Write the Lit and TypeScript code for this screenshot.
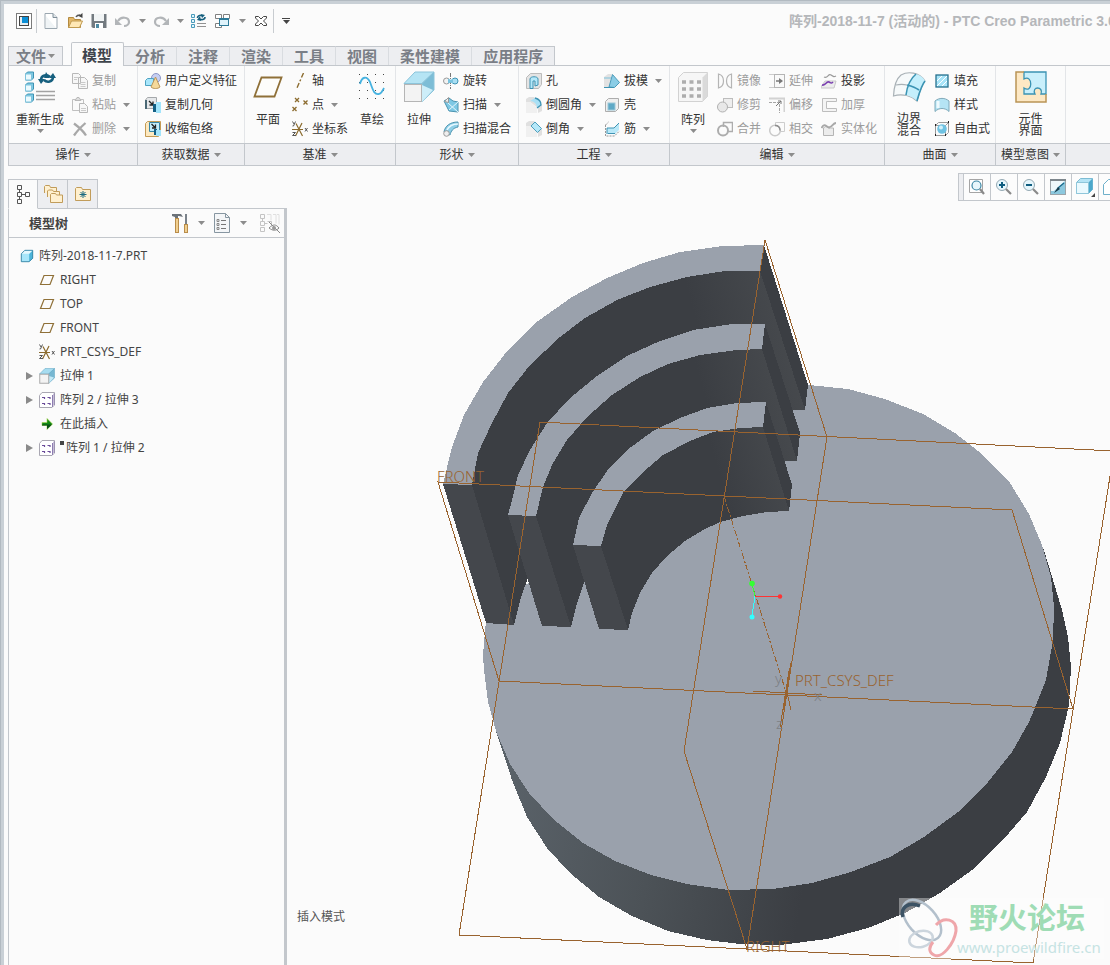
import { LitElement, html, svg, css, nothing } from "lit";
import type { SVGTemplateResult } from "lit";
import { customElement, property } from "lit/decorators.js";
import { classMap } from "lit/directives/class-map.js";

type Glyph = { w: number; h: number; art: SVGTemplateResult };

const csysArt = svg`
  <path d="M0 8.500h11M10 2L3.500 15M4 2.500l6.500 12.500" stroke="#8b6b2e" stroke-width="1.200" fill="none"/>
  <path d="M.500 .500l1.500 2.500M3.500 .500L1.500 5H.500M.500 11.500h3l-3 3h3.500M13 7l2.500 3.500M15.500 7l-2.500 3.500" stroke="#555" fill="none"/>`;

const solidCube = svg`
  <path d="M1.500 5.500l4-4h9v9l-4 4h-9z" fill="#a8e6fa"/>
  <path d="M10.500 14.500v-9l4-4v9z" fill="#4db4d9"/>
  <path d="M1.500 5.500l4-4h9l-4 4z" fill="#e6f8fe"/>
  <path d="M1.500 5.500l4-4h9v9l-4 4h-9z" fill="none" stroke="#2b7fa1"/>`;

const patternArt = svg`
  <path d="M.500 3.500L3 .500h12.500V13L13 15.500H.500z" fill="#fff" stroke="#a9a7b2"/>
  <path d="M13.500 3v12M15 1.500V13" stroke="#8d7db0"/>
  <path d="M3 5.500h2.500V7M8.500 5.500H11V7M3 11.500h2.500V13M8.500 11.500H11V13" stroke="#6b4c9a" fill="none" stroke-width="1.200"/>`;

const glyphs: Record<string, Glyph> = {
  app: { w: 16, h: 16, art: svg`<rect x=".5" y=".5" width="15" height="15" fill="#fff" stroke="#7b7b7b"/><rect x="3.500" y="3.500" width="9" height="9" fill="#e6eef2" stroke="#444"/><rect x="6" y="4" width="6" height="6" fill="#0c8fd6"/>` },
  file: { w: 16, h: 16, art: svg`<path d="M2 .5h8l4 4v11H2z" fill="#fff" stroke="#9ba7b0"/><path d="M3 15V3l10 12z" fill="#f0f4f6"/><path d="M10 .5v4h4" fill="#dfe5e9" stroke="#7f8e99"/>` },
  open: { w: 17, h: 16, art: svg`<path d="M1.500 14.500v-10h5l1 2h6v8z" fill="#e3b768" stroke="#b38a40"/><path d="M1.500 14.500l3-6.500h11l-3 6.500z" fill="#ffe8b5" stroke="#c09a50"/><path d="M9 4c1-2 2-2 4-2" fill="none" stroke="#555" stroke-width="1.500"/><path d="M15.500 0v5l-4-2z" fill="#444"/>` },
  save: { w: 16, h: 16, art: svg`<path d="M.500 1h15v14H2l-1.500-1z" fill="#737a80"/><rect x="3" y="1" width="10" height="7" fill="#f1f4f5"/><rect x="4" y="10" width="8" height="5" fill="#fff"/><rect x="5" y="11" width="3" height="4" fill="#4d8aa3"/>` },
  undo: { w: 16, h: 16, art: svg`<path d="M3 8c3-5 11-4 11 1 0 2-2 4-5 4" fill="none" stroke="#b2b5b8" stroke-width="2.200"/><path d="M0 5v7h7z" fill="#b2b5b8"/>` },
  redo: { w: 16, h: 16, art: svg`<path d="M13 8C10 3 2 4 2 9c0 2 2 4 5 4" fill="none" stroke="#b2b5b8" stroke-width="2.200"/><path d="M16 5v7H9z" fill="#b2b5b8"/>` },
  regenSmall: { w: 16, h: 16, art: svg`<path d="M.5 1.500h3v3h-3zM.5 6.500h3v3h-3zM.5 11.500h3v3h-3z" fill="#e2f6fd" stroke="#4a9bbb"/><path d="M6 10.500h9M6 13.500h9" stroke="#929292"/><path d="M6.500 5c0-3 4-3 5-2M14 4c0 3-4 3-5 2" fill="none" stroke="#17607f" stroke-width="1.600"/><path d="M10 1l4 1-3 3zM10 8L6 7l3-4z" fill="#17607f"/>` },
  windows: { w: 16, h: 16, art: svg`<path d="M.5 1.500h6v4h-6zM8.500 1.500h6v4h-6zM.5 10.500h6v4h-6z" fill="#fff" stroke="#808080"/><rect x="4.500" y="5.500" width="9" height="7" fill="#dff3fb" stroke="#2e7a98"/><path d="M4.500 6.500h9" stroke="#2e7a98"/>` },
  close: { w: 12, h: 12, art: svg`<path d="M.5 1.500h3L6 4l2.500-2.500h3v1.500L8.500 6l3 3v1.500h-3L6 8l-2.500 2.500h-3V9l3-3-3-3z" fill="#fff" stroke="#444"/>` },

  regen: { w: 32, h: 32, art: svg`
    ${[1, 12, 23].map((y) => svg`<path d=${`M1.500 ${y + 2}l2-2h6v6l-2 2h-6z`} fill="#7fcbe5" stroke="#3f93b3"/><path d=${`M1.500 ${y + 2}h6v6h-6z`} fill="#ecfafe" stroke="#7fc3dc"/>`)}
    <path d="M12 20.500h19M12 24.500h19M12 28.500h19" stroke="#a2a2a2" stroke-width="1.500"/>
    <path d="M17 9c0-5 6-6 9-3M29 6c0 5-6 6-9 3" fill="none" stroke="#17607f" stroke-width="2.500"/>
    <path d="M22 1l4 6h-6zM14 8h7l-4 5zM25 7h7l-3-5z" fill="#17607f"/>` },
  copy: { w: 16, h: 16, art: svg`<path d="M.5.5h6l2 2v8h-8zM6.500 4.500h6l3 3v8h-9z" fill="#f7f7f7" stroke="#b8b8b8"/><path d="M2 4.500h4M2 6.500h3M8.500 9.500h5M8.500 11.500h5M8.500 13.500h5" stroke="#cacaca"/>` },
  paste: { w: 16, h: 16, art: svg`<path d="M.5 2.500h11v11h-11z" fill="#fafafa" stroke="#c0c0c0"/><path d="M3 3.500l2-3h2l2 3z" fill="#ddd" stroke="#b8b8b8"/><path d="M7.500 6.500h5l3 3v6h-8z" fill="#f7f7f7" stroke="#b8b8b8"/><path d="M9 11.500h5M9 13.500h5" stroke="#cacaca"/>` },
  remove: { w: 16, h: 16, art: svg`<path d="M2 2.500c4 3 9 7 12 12M13.500 2C9 6 5 10 2 14.500" stroke="#a8a8a8" stroke-width="2.300" fill="none"/>` },
  udf: { w: 16, h: 16, art: svg`<circle cx="11" cy="5" r="4.500" fill="#c6cef2" stroke="#8c96c4"/><path d="M.5 7.500l2-2h6v7h-8z" fill="#a8e6fb" stroke="#4fa3c2"/><path d="M10.500 4l4.500 10c-2 2-7 2-9 0z" fill="#f5d99a" stroke="#b9965a"/>` },
  copyGeom: { w: 16, h: 16, art: svg`<path d="M.5 3l2-2.500h9v9l-2 2h-9z" fill="#e6e8ea" stroke="#a5a8ab"/><path d="M1 3v9" stroke="#4b6875" stroke-width="2"/><path d="M4 4l3.500 3.500M8 4.500V8H4.500" stroke="#222" stroke-width="1.300" fill="none"/><rect x="8" y="7" width="3" height="8" fill="#135f84"/><rect x="11" y="5" width="5" height="11" fill="#a2e4fb"/>` },
  shrink: { w: 16, h: 16, art: svg`<path d="M.5 2.500l2-2h13v12l-2 3h-13z" fill="#fde9c0" stroke="#c49b55"/><path d="M4.500 1.500h10v9h-10z" fill="#c4ecf9" stroke="#3a86a4"/><path d="M6.500 3l3.500 3.500M10.500 3.500V7H7" stroke="#222" stroke-width="1.300" fill="none"/><rect x="9" y="8" width="3" height="6" fill="#135f84"/><rect x="11" y="9" width="5" height="6" fill="#a2e4fb"/>` },
  plane: { w: 30, h: 22, art: svg`<path d="M8.500 1.500h20l-7 19h-20z" fill="#fdfdfb" stroke="#8f7038" stroke-width="1.800"/>` },
  axis: { w: 16, h: 16, art: svg`<path d="M11.500 0L4.500 16" stroke="#8b6b2e" stroke-width="1.400" stroke-dasharray="5 2 2 2"/>` },
  point: { w: 16, h: 16, art: svg`<path d="M3 1l4 4M7 1L3 5M11.500 3.500l4 4M15.500 3.500l-4 4M.500 10l4 4M4.500 10l-4 4" stroke="#8b6b2e" stroke-width="1.300"/>` },
  csys: { w: 16, h: 16, art: csysArt },
  sketch: { w: 28, h: 28, art: svg`${[1, 9, 17, 25].map((y) => svg`<path d=${`M1 ${y + 0.5}h26`} stroke="#444" stroke-dasharray="1 7"/>`)}<path d="M2 11C4 3 9 3 12 9c3 8 4 13 9 12 3-1 4-4 5-6" fill="none" stroke="#45b2e0" stroke-width="1.800"/>` },
  extrude: { w: 32, h: 32, art: svg`<path d="M1 12.500L12 1h19L19 12.500z" fill="#b5e4f4" stroke="#8cc4da"/><path d="M19 12.500L31 1v18L19 31z" fill="#7dbdd6" stroke="#8cc4da"/><path d="M19 31V14l11 5z" fill="#cdeef9"/><rect x="1.500" y="13.500" width="17" height="17" fill="#f3f3f3" stroke="#b5b5b5"/>` },
  revolve: { w: 16, h: 16, art: svg`<path d="M7.500 0v16" stroke="#777" stroke-dasharray="4 1 1 1"/><ellipse cx="3.500" cy="8" rx="3" ry="3" fill="#f2f2f2" stroke="#999"/><ellipse cx="12" cy="8" rx="3" ry="3" fill="#a9def2" stroke="#3e93b3"/><path d="M5 5.500c2 1.500 3 1.500 5 0v5c-2-1-3-1-5 0z" fill="#79c4e0"/>` },
  sweep: { w: 16, h: 16, art: svg`<path d="M1 4l5-3 4 3 5 1v10l-9-1-3-6z" fill="#7ec8e4" stroke="#4c94b0"/><path d="M5 6l10 9M6 13l9-8" stroke="#e5f6fc"/><path d="M1.500 4.500l4-4v5z" fill="#eee" stroke="#999"/>` },
  blend: { w: 16, h: 16, art: svg`<path d="M1 11C2 5 7 1 15 1v5c-5 1-7 4-8 8z" fill="#8fcfe7" stroke="#4c94b0"/><path d="M4 9c2-4 5-6 11-6" stroke="#e8f8ff" stroke-width="1.500" fill="none"/><circle cx="3.500" cy="12.500" r="2.800" fill="#eee" stroke="#999"/>` },
  hole: { w: 16, h: 16, art: svg`<path d="M.5 4.500l4-4h11v11l-3 4h-12z" fill="#e4e4e4" stroke="#bbb"/><path d="M4 15.500V6c0-3 8-3 8 0v6l-3 1V8H7v7.500z" fill="#b5e8f9" stroke="#3e93b3"/>` },
  round: { w: 16, h: 16, art: svg`<path d="M0 2L3 0h5l8 8v6l-4 2V11L4 5H0z" fill="#e0e0e0"/><path d="M0 5h4l7 6v5H0z" fill="#f0f0f0"/><path d="M4 4l5-3c4 1 6 4 6 7l-4 3c0-4-3-7-7-7z" fill="#a9e0f5"/><path d="M9 1c4 1 6 4 6 7l-4 3" stroke="#3e93b3" stroke-width="1.300" fill="none"/>` },
  chamfer: { w: 16, h: 16, art: svg`<path d="M0 2L3 0h5l8 8v6l-4 2V11L4 5H0z" fill="#e0e0e0"/><path d="M0 5h4l7 6v5H0z" fill="#f0f0f0"/><path d="M5 5l4-4 6.500 6.500-4 4z" fill="#b5e8f9" stroke="#4f9fbd"/>` },
  draft: { w: 16, h: 16, art: svg`<path d="M0 14V4l4-3h4L5 14z" fill="#e2e2e2"/><path d="M5 14L8.500 1.500l7 8-5 5z" fill="#8bcde6" stroke="#4c9bb9"/><path d="M0 14.500h10" stroke="#3e93b3"/><path d="M0 5h7" stroke="#7fc3dc"/>` },
  shell: { w: 16, h: 16, art: svg`<path d="M1.500 4.500l3-3h10v10l-3 3h-10z" fill="#efefef" stroke="#adadad"/><rect x="4" y="6" width="7" height="7" fill="#5fa9c6" stroke="#9cc7d8"/>` },
  rib: { w: 16, h: 16, art: svg`<path d="M1.500 4v11h9l5-5M1.500 4l3-3" fill="none" stroke="#999" stroke-dasharray="2 1"/><path d="M3 7h7l5-5v7l-4 4H3z" fill="#b9e8f8"/><path d="M3 13V7h7l5-5M4 12.500h7" fill="none" stroke="#3e93b3"/>` },
  pattern: { w: 32, h: 32, art: svg`<path d="M1.500 6.500l5-5h24v24l-5 5h-24z" fill="#f6f6f6" stroke="#d2d2d2"/><path d="M25.500 6.500l5-5v24l-5 5z" fill="#dadada"/>${[11, 18, 25].map((y) => svg`<path d=${`M5 ${y}h19`} stroke="#adadad" stroke-width="3.500" stroke-dasharray="4 3.500"/>`)}` },
  mirror: { w: 16, h: 16, art: svg`<path d="M1.500 1c4 1 5 4 5 7s-1 6-5 7zM14.500 1c-4 1-5 4-5 7s1 6 5 7z" fill="none" stroke="#b5b5b5" stroke-width="1.200"/>` },
  trim: { w: 16, h: 16, art: svg`<rect x="6.500" y="1.500" width="9" height="9" fill="#eee" stroke="#bdbdbd"/><circle cx="5.500" cy="10" r="5" fill="#e8e8e8" stroke="#b0b0b0"/>` },
  merge: { w: 16, h: 16, art: svg`<path d="M6.500 6V1.500h9v9H11" fill="none" stroke="#adadad" stroke-width="1.500"/><circle cx="6" cy="9.500" r="5" fill="none" stroke="#adadad" stroke-width="2"/>` },
  extend: { w: 16, h: 16, art: svg`<rect x="5.500" y="1.500" width="10" height="13" fill="#f9f9f9" stroke="#b5b5b5"/><path d="M0 1.500h5M0 14.500h5" stroke="#ccc"/><path d="M7 8h5" stroke="#777" stroke-width="1.500"/><path d="M10 5l4 3-4 3z" fill="#777"/>` },
  offset: { w: 16, h: 16, art: svg`<path d="M0 1.500h15.500V15" fill="none" stroke="#d2d2d2" stroke-width="2"/><path d="M0 5.500h10.500V16" fill="none" stroke="#a5a5a5" stroke-dasharray="3 1"/><path d="M7 9l5-5M9 4h3v3" stroke="#777" fill="none"/>` },
  intersect: { w: 16, h: 16, art: svg`<path d="M6.500 4V1.500h9v9H11" fill="none" stroke="#cdcdcd"/><circle cx="6" cy="9.500" r="5.300" fill="none" stroke="#cacaca" stroke-width="1.500"/><path d="M6 4.500c3 0 5 2 5 5" stroke="#8d8d8d" stroke-width="1.300" fill="none"/>` },
  project: { w: 16, h: 16, art: svg`<path d="M3 4c4 2 4-4 7-2 3 2 3 2 5 1" fill="none" stroke="#999" stroke-width="1.200"/><path d="M0 14l4-6h11l-2 7H0z" fill="#ededed" stroke="#c8c8c8"/><path d="M1 12c4 1 4-4 7-3 2 1 2 2 4 0" fill="none" stroke="#7a3fb0" stroke-width="1.600"/>` },
  thicken: { w: 16, h: 16, art: svg`<path d="M15.500 1.500h-14v13h14v-3h-10v-7h10z" fill="#f4f4f4" stroke="#bdbdbd"/>` },
  solidify: { w: 16, h: 16, art: svg`<path d="M2.500 14.500V7c3-4 5 2 7 0v0l3 0v7.500z" fill="#ececec" stroke="#b5b5b5"/><path d="M.500 7C4 0 6 8 9 6c3-1 3-4 6-4" fill="none" stroke="#a8a8a8" stroke-width="1.800"/>` },
  boundary: { w: 34, h: 32, art: svg`<path d="M1.500 25C2 15 4 8 9 4c7-4 18-3 24 6-4 5-6 13-8 20-5-5-15-8-23.500-5z" fill="#f6f9fa" stroke="#a9b1b6" stroke-width="1.200"/><path d="M24 3c4 1 7 3 9 7-4 5-6 13-8 20-3-3-7-5-11-6 1-8 4-16 10-21z" fill="#c4effc"/><path d="M4 14c4-1 7-1 11 0" fill="none" stroke="#a9b1b6" stroke-width="1.200"/><path d="M14 24c1-8 4-16 10-21M15 14c4 1 8 2 12 5M33 10c-4 5-6 13-8 20" fill="none" stroke="#3a93b3" stroke-width="1.600"/>` },
  fill: { w: 16, h: 16, art: svg`<rect x="2" y="2" width="12" height="12" fill="#a8e4f8" stroke="#26708e" stroke-width="1.300"/><path d="M3 8l5-5M3 13L13 3M8 13l5-5" stroke="#fff"/>` },
  style: { w: 16, h: 16, art: svg`<path d="M1 14.500V4c4-3.500 10-3.500 14 0v10.500c-4-4-10-4-14 0z" fill="#b5e4f4" stroke="#7fa9b9"/><path d="M4 11V4" stroke="#eefafe" stroke-width="3"/>` },
  freestyle: { w: 16, h: 16, art: svg`<path d="M1.500 4.500l3-3h10v10l-3 3h-10zM1.500 4.500h10v10M11.500 4.500l3-3" fill="none" stroke="#999"/><circle cx="8" cy="8" r="4.800" fill="#6fc2e2"/><circle cx="7" cy="6.500" r="2" fill="#d2f0fa"/><path d="M1 4h1M1 14h1M14 1h1M11 14h1" stroke="#222" stroke-width="2"/>` },
  component: { w: 32, h: 32, art: svg`<rect x="1" y="1" width="30" height="30" fill="#fde8c4"/><path d="M9 1h22v22h-5c3-8-10-8-6 0H9v-6c9 6 9-14 0-9z" fill="#c9effb" stroke="#3a93b3" stroke-width="1.300"/><path d="M9 1H1v30h30v-8" stroke="#b99455" stroke-width="1.500" fill="none"/>` },

  treeTab: { w: 16, h: 20, art: svg`<path d="M2.500 1.500h4v4h-4zM2.500 8.500h4v4h-4zM2.500 15.500h4v4h-4zM10.500 8.500h4v4h-4zM4.500 5.500v3M4.500 12.500v3M6.500 10.500h4" fill="none" stroke="#555"/>` },
  folders: { w: 20, h: 20, art: svg`<path d="M1.500 9V2.500l1-1h4l1 2h6V7" fill="#fff0cf" stroke="#c19c5a"/><path d="M4.500 13V7l1-1h4l1 1.500h6V11" fill="#fff0cf" stroke="#c19c5a"/><path d="M7.500 18.500v-8l1-1h4l1 1.500h6v7.500z" fill="#fff0cf" stroke="#c19c5a"/>` },
  favorites: { w: 18, h: 16, art: svg`<path d="M1.500 14.500v-12l1-1h5l1 2h8v11z" fill="#fff0cf" stroke="#c19c5a"/><path d="M9 5v7M5.500 8.500h7M6.500 6l5 5M11.500 6l-5 5" stroke="#1b6a80"/>` },
  tools: { w: 18, h: 20, art: svg`<path d="M1 1h9l2 3-4-1H7v3H4V4L1 3z" fill="#6b7279"/><rect x="4.500" y="5.500" width="3" height="14" fill="#f0cf90" stroke="#b98d4a"/><path d="M15 1v10" stroke="#7a828a" stroke-width="2"/><rect x="13.500" y="11.500" width="3" height="8" fill="#f0cf90" stroke="#b98d4a"/>` },
  settings: { w: 18, h: 20, art: svg`<path d="M1.500.5h11l4 4v15h-15z" fill="#f4f6f8" stroke="#8796a1"/><path d="M12.500.5v4h4" fill="none" stroke="#8796a1"/><path d="M8 7.500h5M8 11.500h5M8 15.500h5" stroke="#777"/><path d="M4 6.500h2v2H4zM4 10.500h2v2H4zM4 14.500h2v2H4z" fill="none" stroke="#888"/>` },
  hideTree: { w: 22, h: 20, art: svg`<path d="M1.500 1.500h4v4h-4zM1.500 8.500h4v4h-4zM1.500 14.500h4v4h-4zM8.500 8.500h4v4M3.500 5.500v3M5.500 10.500h3" fill="none" stroke="#c4c4c4"/><path d="M8 1.500h4v6M14 1.500h3v9M18 1.500h2v10" fill="none" stroke="#e0e0e0"/><path d="M10 15c4-4 7-4 10 0-3 3-6 3-10 0zM10 9l11 11" fill="none" stroke="#888"/><circle cx="15" cy="15" r="2" fill="#999"/>` },

  part: { w: 14, h: 14, art: svg`<svg viewBox="0 0 16 16" width="14" height="14">${solidCube}</svg>` },
  datum: { w: 16, h: 16, art: svg`<path d="M5 3.500h9.500L11 12.500H1.500z" fill="none" stroke="#8f7038" stroke-width="1.200"/>` },
  extrudeSmall: { w: 16, h: 16, art: svg`<svg viewBox="0 0 32 32" width="16" height="16"><path d="M1 12L12 1h19L20 12z" fill="#a6dcf0" stroke="#5aa3c0"/><path d="M19 12L31 1v19L19 31z" fill="#76b7d2" stroke="#5aa3c0"/><path d="M20 30V16l10 3z" fill="#c4e9f6"/><rect x="1.500" y="12.500" width="18" height="18" fill="#f3f3f3" stroke="#aaa" stroke-width="2"/></svg>` },
  patternSmall: { w: 16, h: 16, art: patternArt },
  insert: { w: 16, h: 16, art: svg`<path d="M3 6.500h5v-4l5.500 5.500L8 13.500v-4H3z" fill="#128a12" stroke="#a9d64e" stroke-width=".6"/><path d="M3 8.500h10L8 13V9.500H3z" fill="#0b4f16"/>` },

  refit: { w: 18, h: 18, art: svg`<path d="M1.500 1.500h13v13h-13z" fill="#fff" stroke="#a5a5a5"/><circle cx="8.500" cy="7.500" r="4.500" fill="#e8f7fc" stroke="#3a86a4" stroke-width="1.200"/><path d="M12 11l4 5" stroke="#8a8a8a" stroke-width="2.200"/>` },
  zoomIn: { w: 18, h: 18, art: svg`<circle cx="7" cy="7" r="5.500" fill="#e6f6fc" stroke="#95a9b3"/><path d="M4 7h6M7 4v6" stroke="#0f5d80" stroke-width="2"/><path d="M11 11l5 5" stroke="#8a8a8a" stroke-width="2.200"/>` },
  zoomOut: { w: 18, h: 18, art: svg`<circle cx="7" cy="7" r="5.500" fill="#e6f6fc" stroke="#95a9b3"/><path d="M4 7h6" stroke="#0f5d80" stroke-width="2"/><path d="M11 11l5 5" stroke="#8a8a8a" stroke-width="2.200"/>` },
  repaint: { w: 18, h: 18, art: svg`<rect x="1.500" y="1.500" width="15" height="15" fill="#8cc8de" stroke="#9ca4a9"/><path d="M2 3h14L5 13H2z" fill="#eef8fb"/><path d="M1 2h16" stroke="#7d868c" stroke-width="2"/><path d="M15 5L9 10" stroke="#1b6a8a" stroke-width="1.300"/><path d="M9 9l2 2-6 4z" fill="#15394a"/>` },
  shading: { w: 20, h: 20, art: svg`<path d="M1.500 5.500l4-4h12v11l-4 4h-12z" fill="#b5e4f5" stroke="#7dbcd4"/><path d="M13.500 16.500v-11l4-4v11z" fill="#4ca8cb"/><path d="M1.500 5.500h12v11h-12z" fill="#eaf9fe" stroke="#8fc6da"/><path d="M20 16v4h-4z" fill="#444"/>` },
  saved: { w: 20, h: 20, art: svg`<path d="M1.500 7.500l5-5h11v11l-4 4h-12z" fill="#fff" stroke="#6fb0ca"/>` },
};

const glyph = (name: string) => {
  const g = glyphs[name];
  return html`<svg class="glyph" width=${g.w} height=${g.h} viewBox=${`0 0 ${g.w} ${g.h}`} aria-hidden="true">${g.art}</svg>`;
};

const caret = (dark = false) =>
  html`<svg class="caret" width="7" height="4" viewBox="0 0 7 4" aria-hidden="true"><path d="M0 0h7L3.500 4z" fill=${dark ? "#444" : "#8c8c8c"}/></svg>`;

interface Command { icon: string; label: string; off?: boolean; menu?: boolean }
interface Big { icon: string; lines: string[]; menu?: boolean }
type Block = Big | Command[];
interface Group { title: string; blocks: Block[] }

const groups: Group[] = [
  { title: "操作", blocks: [
    { icon: "regen", lines: ["重新生成"], menu: true },
    [{ icon: "copy", label: "复制", off: true }, { icon: "paste", label: "粘贴", off: true, menu: true }, { icon: "remove", label: "删除", off: true, menu: true }],
  ] },
  { title: "获取数据", blocks: [
    [{ icon: "udf", label: "用户定义特征" }, { icon: "copyGeom", label: "复制几何" }, { icon: "shrink", label: "收缩包络" }],
  ] },
  { title: "基准", blocks: [
    { icon: "plane", lines: ["平面"] },
    [{ icon: "axis", label: "轴" }, { icon: "point", label: "点", menu: true }, { icon: "csys", label: "坐标系" }],
    { icon: "sketch", lines: ["草绘"] },
  ] },
  { title: "形状", blocks: [
    { icon: "extrude", lines: ["拉伸"] },
    [{ icon: "revolve", label: "旋转" }, { icon: "sweep", label: "扫描", menu: true }, { icon: "blend", label: "扫描混合" }],
  ] },
  { title: "工程", blocks: [
    [{ icon: "hole", label: "孔" }, { icon: "round", label: "倒圆角", menu: true }, { icon: "chamfer", label: "倒角", menu: true }],
    [{ icon: "draft", label: "拔模", menu: true }, { icon: "shell", label: "壳" }, { icon: "rib", label: "筋", menu: true }],
  ] },
  { title: "编辑", blocks: [
    { icon: "pattern", lines: ["阵列"], menu: true },
    [{ icon: "mirror", label: "镜像", off: true }, { icon: "trim", label: "修剪", off: true }, { icon: "merge", label: "合并", off: true }],
    [{ icon: "extend", label: "延伸", off: true }, { icon: "offset", label: "偏移", off: true }, { icon: "intersect", label: "相交", off: true }],
    [{ icon: "project", label: "投影" }, { icon: "thicken", label: "加厚", off: true }, { icon: "solidify", label: "实体化", off: true }],
  ] },
  { title: "曲面", blocks: [
    { icon: "boundary", lines: ["边界", "混合"] },
    [{ icon: "fill", label: "填充" }, { icon: "style", label: "样式" }, { icon: "freestyle", label: "自由式" }],
  ] },
  { title: "模型意图", blocks: [{ icon: "component", lines: ["元件", "界面"] }] },
];

const reset = css`
  * { box-sizing: border-box; }
  button {
    appearance: none; margin: 0; padding: 0; border: 0; background: none;
    font: inherit; color: inherit; display: flex; align-items: center; justify-content: center;
  }
  svg { display: block; flex: none; }
`;

@customElement("quick-access")
export class QuickAccess extends LitElement {
  static styles = [reset, css`
    :host { display: flex; align-items: center; height: 32px; }
    .tool { width: 24px; height: 24px; }
    .app { width: 32px; padding-left: 8px; }
    .drop { width: 14px; height: 24px; }
    .rule { width: 1px; height: 24px; background: #c8ccd0; }
    .start { margin-right: 2px; }
    .more { width: 24px; height: 24px; flex-direction: column; gap: 1px; }
    .bar { width: 8px; height: 1px; background: #444; }
  `];

  private tool(icon: string, label: string) {
    return html`<button class="tool" aria-label=${label}>${glyph(icon)}</button>`;
  }
  private drop(label: string) {
    return html`<button class="drop" aria-label=${label}>${caret()}</button>`;
  }
  render() {
    return html`
      <button class="tool app" aria-label="窗口">${glyph("app")}</button>
      <span class="rule start"></span>
      ${this.tool("file", "新建")} ${this.tool("open", "打开")} ${this.tool("save", "保存")}
      ${this.tool("undo", "撤销")} ${this.drop("撤销列表")}
      ${this.tool("redo", "重做")} ${this.drop("重做列表")}
      ${this.tool("regenSmall", "重新生成")} ${this.tool("windows", "窗口")} ${this.drop("窗口列表")}
      ${this.tool("close", "关闭")}
      <span class="rule"></span>
      <button class="more" aria-label="自定义"><span class="bar"></span>${caret(true)}</button>`;
  }
}

@customElement("ribbon-bar")
export class RibbonBar extends LitElement {
  static styles = [reset, css`
    :host { display: block; color: #333; font-size: 12px; line-height: 14px; }
    .tabs { display: flex; align-items: flex-end; border-bottom: 1px solid #c3c7cc; font-size: 15px; line-height: 16px; font-weight: bold; color: #7a7e86; }
    .tab { height: 19px; padding: 0 11px; background: #edeef1; border: solid #c3c7cc; border-width: 1px 1px 0 0; white-space: nowrap; }
    .mid { border-right-color: #d9dce0; }
    .file { padding: 0 7px; gap: 2px; border-left-width: 1px; margin-right: 8px; }
    .current { height: 24px; margin-bottom: -1px; background: #fbfbfb; color: #3f444c; border-left-width: 1px; border-radius: 2px 2px 0 0; padding: 0 11px 0 10px; }
    .groups { display: grid; grid-template-columns: 129px 107px 151px 123px 151px 215px 111px 70px 1fr; border-left: 1px solid #c3c7cc; }
    .group { display: flex; flex-direction: column; min-width: 0; }
    .body { display: flex; height: 77px; padding: 3px 0 0 7px; gap: 8px; border-right: 1px solid #e3e5e8; }
    .foot { height: 23px; background: #edeef1; border: solid #c3c7cc; border-width: 1px 1px 1px 0; gap: 4px; display: flex; align-items: center; justify-content: center; width: 100%; white-space: nowrap; }
    .rest { border-right: 0; }
    .col { display: flex; flex-direction: column; }
    .cmd { height: 24px; gap: 4px; justify-content: flex-start; white-space: nowrap; }
    .cmd .caret { margin-left: 3px; }
    .off { color: #9c9c9c; }
    .big { flex-direction: column; justify-content: flex-start; align-self: stretch; }
    .art { height: 36px; min-width: 32px; display: flex; align-items: center; justify-content: center; }
    .text { display: flex; flex-direction: column; padding-top: 8px; white-space: nowrap; }
    .stack { line-height: 12px; }
    .big .caret { margin-top: 2px; }
    .solo { justify-content: center; padding-left: 0; }
  `];

  private block(b: Block) {
    if (Array.isArray(b)) {
      return html`<div class="col">${b.map((c) => html`
        <button class=${classMap({ cmd: true, off: !!c.off })} ?disabled=${c.off}>
          ${glyph(c.icon)}<span>${c.label}</span>${c.menu ? caret() : nothing}
        </button>`)}</div>`;
    }
    return html`<button class="big">
      <span class="art">${glyph(b.icon)}</span>
      <span class=${classMap({ text: true, stack: b.lines.length > 1 })}>${b.lines.map((l) => html`<span>${l}</span>`)}</span>
      ${b.menu ? caret() : nothing}
    </button>`;
  }

  render() {
    const tabs = ["分析", "注释", "渲染", "工具", "视图", "柔性建模", "应用程序"];
    return html`
      <div class="tabs" role="tablist">
        <button class="tab file">文件${caret()}</button>
        <button class="tab current" role="tab" aria-selected="true">模型</button>
        ${tabs.map((t, i) => html`<button role="tab" class=${classMap({ tab: true, mid: i < tabs.length - 1 })}>${t}</button>`)}
      </div>
      <div class="groups">
        ${groups.map((g) => html`<section class="group" aria-label=${g.title}>
          <div class=${classMap({ body: true, solo: g.blocks.length === 1 && !Array.isArray(g.blocks[0]) })}>${g.blocks.map((b) => this.block(b))}</div>
          <button class="foot">${g.title}${caret()}</button>
        </section>`)}
        <div class="group"><div class="body rest"></div><div class="foot rest"></div></div>
      </div>`;
  }
}

interface Node { icon: string; label: string; open?: boolean; mark?: boolean }

@customElement("model-tree")
export class ModelTree extends LitElement {
  static styles = [reset, css`
    :host { display: flex; flex-direction: column; padding-top: 13px; font-size: 12px; line-height: 16px; color: #444; }
    .tabs { display: flex; position: relative; z-index: 1; }
    .tab { width: 30px; height: 30px; border: 1px solid #c3c7cc; border-left-width: 0; background: #edeef1; }
    .on { background: #fbfbfb; border-left-width: 1px; border-bottom-color: #fbfbfb; }
    .panel { flex: 1; margin-top: -1px; border: solid #c3c7cc; border-width: 1px 3px 0 1px; }
    .head { display: flex; align-items: center; height: 29px; padding: 0 3px 0 20px; border-bottom: 1px solid #c3c7cc; }
    .title { flex: 1; margin: 0; font-size: 13px; line-height: 16px; font-weight: bold; }
    .tool { height: 24px; }
    .last { margin-left: 4px; }
    .drop { width: 24px; height: 24px; }
    .tree { list-style: none; margin: 0; padding: 6px 0; }
    .row { display: flex; align-items: center; height: 24px; gap: 5px; padding-left: 11px; white-space: pre; }
    .child { padding-left: 16px; }
    .twist { width: 9px; }
    .mark { width: 4px; height: 4px; background: #444; align-self: flex-start; margin: 5px -3px 0 0; }
  `];

  private nodes: Node[] = [
    { icon: "datum", label: "RIGHT" }, { icon: "datum", label: "TOP" }, { icon: "datum", label: "FRONT" },
    { icon: "csys", label: "PRT_CSYS_DEF" },
    { icon: "extrudeSmall", label: "拉伸 1", open: true },
    { icon: "patternSmall", label: "阵列 2 / 拉伸 3", open: true },
    { icon: "insert", label: "在此插入" },
    { icon: "patternSmall", label: "阵列 1 / 拉伸 2", open: true, mark: true },
  ];

  render() {
    return html`
      <div class="tabs" role="tablist">
        <button class="tab on" role="tab" aria-label="模型树">${glyph("treeTab")}</button>
        <button class="tab" role="tab" aria-label="文件夹浏览器">${glyph("folders")}</button>
        <button class="tab" role="tab" aria-label="收藏夹">${glyph("favorites")}</button>
      </div>
      <div class="panel">
        <div class="head">
          <h2 class="title">模型树</h2>
          <button class="tool" aria-label="工具">${glyph("tools")}</button>
          <button class="drop" aria-label="工具列表">${caret()}</button>
          <button class="tool" aria-label="设置">${glyph("settings")}</button>
          <button class="drop" aria-label="设置列表">${caret()}</button>
          <button class="tool last" aria-label="显示">${glyph("hideTree")}</button>
        </div>
        <ul class="tree" role="tree">
          <li class="row" role="treeitem">${glyph("part")}<span>阵列-2018-11-7.PRT</span></li>
          ${this.nodes.map((n) => html`<li class="row child" role="treeitem"><svg class="twist" width="9" height="10" viewBox="0 0 9 10">${n.open ? svg`<path d="M1 1l7 4-7 4z" fill="#8a8a8a"/>` : nothing}</svg>${glyph(n.icon)}${n.mark ? html`<i class="mark"></i>` : nothing}<span>${n.label}</span></li>`)}
        </ul>
      </div>`;
  }
}

@customElement("view-canvas")
export class ViewCanvas extends LitElement {
  @property() mode = "插入模式";

  static styles = [reset, css`
    :host { display: block; position: relative; overflow: hidden; min-width: 0; font-size: 12px; }
    .scene { width: 100%; height: 100%; }
    .faces { shape-rendering: crispEdges; }
    .lines { fill: none; stroke: #99632f; stroke-width: 1; shape-rendering: crispEdges; }
    .tag { font-size: 15px; font-weight: 300; fill: #99632f; }
    .small { fill: #7c7f84; }
    .site { font-size: 29px; font-weight: bold; fill: #9fdcb5; }
    .url { font-size: 15px; fill: #c6e3e3; }
    .bar { position: absolute; top: 7px; left: 671px; display: flex; height: 28px; background: #fcfcfc; border: solid #c3c7cc; border-width: 1px 0 1px 1px; }
    .grip { width: 4px; background: #edeef1; }
    .view { width: 27px; border-left: 1px solid #c3c7cc; }
    .status { position: absolute; left: 10px; bottom: 40px; color: #555; line-height: 16px; }
  `];

  render() {
    return html`
      <svg class="scene" role="img" aria-label="PRT">
        <defs>
          <linearGradient id="side" gradientUnits="userSpaceOnUse" x1="500" y1="800" x2="810" y2="850">
            <stop offset="0" stop-color="#5a6269"/><stop offset=".5" stop-color="#4c5257"/><stop offset="1" stop-color="#3b3e43"/>
          </linearGradient>
          <linearGradient id="w1" gradientUnits="userSpaceOnUse" x1="690" y1="300" x2="771" y2="278"><stop offset="0" stop-color="#3b3e43"/><stop offset="1" stop-color="#46494d"/></linearGradient>
          <linearGradient id="w2" gradientUnits="userSpaceOnUse" x1="700" y1="380" x2="772" y2="360"><stop offset="0" stop-color="#3b3e43"/><stop offset="1" stop-color="#46494d"/></linearGradient>
          <linearGradient id="w3" gradientUnits="userSpaceOnUse" x1="715" y1="460" x2="780" y2="440"><stop offset="0" stop-color="#3b3e43"/><stop offset="1" stop-color="#46494d"/></linearGradient>
        </defs>
        <g transform="translate(-287 -166)">
          <g class="faces">
            <path fill="url(#side)" d="M1043 547L1053 580 1062 610 1068 637 1071 667 1069 705 1060 743 1046 777 1027 812 1003 840 972 870 940 893 905 913 868 928 827 939 780 945 740 944 707 940 668 931 632 916 599 897 570 873 547 848 527 817 512 780 496 731 700 650z"/>
            <path fill="#9aa1ac" d="M809 385L848 389 885 399 923 414 955 433 982 454 1010 483 1029 514 1042 545 1051 577 1054 607 1053 640 1046 680 1034 710 1029 722 1012 752 984 787 958 812 924 837 890 857 851 872 812 883 773 889 728 890 687 884 651 875 615 861 583 843 553 819 529 793 510 764 496 731 488 702 484 670 483 655 486 620 600 520 760 400z"/>
            <path fill="url(#w1)" d="M760 271L725 271 687 277 650 287 617 300 585 318 560 337 530 365 508 393 492 423 478 453 472 485 514 625 521 597 528 578 560 530 793 410 805 410z"/>
            <path fill="#3b3e43" d="M764 245L808 385 805 410 760 271z"/>
            <path fill="#9aa1ac" d="M764 245L723 246 680 252 643 263 607 278 572 297 538 321 508 350 483 382 464 415 452 447 443 484 472 485 478 453 492 423 508 393 530 365 560 337 585 318 617 300 650 287 687 277 725 271 760 271z"/>
            <path fill="#44474c" d="M443 484L472 485 514 625 486 623z"/>
            <path fill="url(#w2)" d="M762 349L737 350 700 355 668 364 640 377 612 395 587 417 567 440 552 465 543 487 536 516 571 627 577 603 584 583 620 540 785 461 797 461z"/>
            <path fill="#3b3e43" d="M765 324L800 433 797 461 762 349z"/>
            <path fill="#9aa1ac" d="M765 324L732 324 693 330 660 341 627 356 597 376 570 398 547 423 530 450 518 475 512 500 508 515 536 516 543 487 552 465 567 440 587 417 612 395 640 377 668 364 700 355 737 350 762 349z"/>
            <path fill="#44474c" d="M508 515L536 516 571 627 542 626z"/>
            <path fill="url(#w3)" d="M763 427L740 428 713 432 690 441 663 455 642 473 623 493 607 525 601 546 628 630 632 613 640 593 652 573 667 556 685 541 703 530 720 522 743 516 767 512 789 511z"/>
            <path fill="#3b3e43" d="M766 402L792 485 789 511 763 427z"/>
            <path fill="#9aa1ac" d="M766 402L737 403 707 408 680 418 653 431 627 450 607 471 592 493 579 518 573 545 601 546 607 525 617 505 623 493 642 473 663 455 690 441 713 432 740 428 763 427z"/>
            <path fill="#44474c" d="M573 545L601 546 628 630 599 629z"/>
          </g>
          <g class="lines">
            <path d="M438 482L1012 510 1073 709 499 681z"/>
            <path d="M765 240L827 437 747 949 684 751z"/>
            <path d="M540 422L1114 451 1033 963 459 935z"/>
            <path d="M724 496L786 692" stroke-dasharray="6 2 2 2"/>
            <path d="M753 691L822 695M791 663L780 727M787 692L791 710"/>
            <path d="M790 668L784 706" stroke-width="2"/>
            <path d="M755 596L752 584" stroke="#3f3"/><path d="M755 596L779 597" stroke="#f33"/><path d="M755 596L752 616" stroke="#3ff"/>
          </g>
          <circle cx="752" cy="583.500" r="2.800" fill="#3f3"/><circle cx="780" cy="596.500" r="2.200" fill="#f33"/><circle cx="752" cy="617" r="2.500" fill="#3ff"/>
          <text class="tag" x="437" y="482">FRONT</text>
          <text class="tag" x="746" y="952">RIGHT</text>
          <text class="tag" x="795" y="686">PRT_CSYS_DEF</text>
          <text class="tag small" x="775" y="684">y</text>
          <text class="tag small" x="814" y="701">x</text>
          <text class="tag small" x="776" y="729">z</text>
          <g>
            <rect x="899" y="898" width="205" height="61" fill="#fff" fill-opacity=".38"/>
            <g fill="none">
              <ellipse cx="922" cy="920" rx="24" ry="14" transform="rotate(48 922 920)" stroke="#b3c0cc" stroke-width="2.500"/>
              <path d="M903 917c-3-9 5-16 17-11" stroke="#3c5365" stroke-width="3.500"/>
              <ellipse cx="921" cy="939" rx="12" ry="8" transform="rotate(-15 921 939)" stroke="#ccd5dd" stroke-width="2.500"/>
              <path d="M936 925c8-9 21-6 20 6-2 13-14 28-22 24-6-3-5-8-1-13" stroke="#efa6aa" stroke-width="3"/>
            </g>
            <text class="site" x="969" y="929">野火论坛</text>
            <text class="url" x="957" y="953">www.proewildfire.cn</text>
          </g>
        </g>
      </svg>
      <div class="bar" role="toolbar">
        <span class="grip"></span>
        ${[["refit", "重新调整"], ["zoomIn", "放大"], ["zoomOut", "缩小"], ["repaint", "重画"], ["shading", "显示样式"], ["saved", "已保存方向"]].map(
          ([icon, label]) => html`<button class="view" aria-label=${label}>${glyph(icon)}</button>`)}
      </div>
      <div class="status" role="status">${this.mode}</div>`;
  }
}

@customElement("app-root")
export class AppRoot extends LitElement {
  static styles = css`
    :host {
      display: block; height: 100vh; overflow: hidden; background: #fbfbfb;
      font-family: "Noto Sans", "Noto Sans CJK SC", sans-serif;
    }
    * { box-sizing: border-box; }
    .window { height: 100%; border: solid #b2bac1; border-width: 1px 0 0 1px; }
    .frame { height: 100%; display: flex; flex-direction: column; border: solid #c9d0d6; border-width: 3px 0 0 3px; }
    .top { display: grid; grid-template-columns: 785px minmax(0, 1fr); align-items: center; height: 38px; padding-bottom: 4px; }
    .title { margin: 0; font: bold 14px/20px "Liberation Sans", "Noto Sans CJK SC", sans-serif; color: #b5b7ba; white-space: nowrap; overflow: hidden; }
    .ribbon { margin-left: 4px; flex: none; }
    .work { flex: 1; min-height: 0; display: grid; grid-template-columns: 279px minmax(0, 1fr); margin-left: 4px; }
  `;
  render() {
    return html`<div class="window"><div class="frame">
      <header class="top">
        <quick-access></quick-access>
        <h1 class="title">阵列-2018-11-7 (活动的) - PTC Creo Parametric 3.0</h1>
      </header>
      <ribbon-bar class="ribbon"></ribbon-bar>
      <main class="work">
        <model-tree></model-tree>
        <view-canvas></view-canvas>
      </main>
    </div></div>`;
  }
}
